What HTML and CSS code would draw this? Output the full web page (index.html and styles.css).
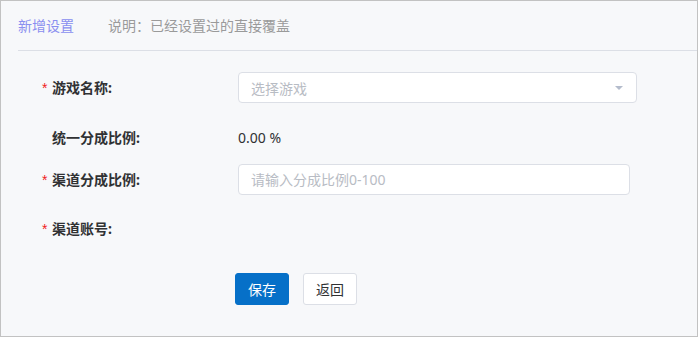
FILE: index.html
```html
<!DOCTYPE html>
<html lang="zh-CN">
<head>
<meta charset="utf-8">
<title>新增设置</title>
<link rel="stylesheet" href="styles.css">
</head>
<body>
<div class="panel">
  <div class="header">
    <span class="tab">新增设置</span>
    <span class="note">说明：已经设置过的直接覆盖</span>
  </div>
  <form class="form">
    <div class="item item-game">
      <label class="label"><span class="star">*</span>游戏名称:</label>
      <div class="select">
        <span class="placeholder">选择游戏</span>
        <span class="caret"></span>
      </div>
    </div>
    <div class="item item-ratio">
      <label class="label"><span class="star"></span>统一分成比例:</label>
      <div class="value">0.00 %</div>
    </div>
    <div class="item item-channel">
      <label class="label"><span class="star">*</span>渠道分成比例:</label>
      <input class="input" type="text" placeholder="请输入分成比例0-100">
    </div>
    <div class="item item-account">
      <label class="label"><span class="star">*</span>渠道账号:</label>
    </div>
    <div class="actions">
      <button type="button" class="btn btn-primary">保存</button>
      <button type="button" class="btn btn-default">返回</button>
    </div>
  </form>
</div>
</body>
</html>
```

FILE: styles.css
```css
html, body {
  margin: 0;
  padding: 0;
  background: #ffffff;
}
body {
  font-family: "Noto Sans", "Noto Sans CJK SC", sans-serif;
  font-size: 14px;
  color: #303133;
}
.panel {
  width: 698px;
  height: 337px;
  box-sizing: border-box;
  border: 1px solid #c2c2c2;
  background: #f7f8fa;
}
.header {
  height: 49px;
  margin-left: 17px;
  border-bottom: 1px solid #dcdfe6;
  display: flex;
  align-items: center;
  gap: 34px;
}
.tab {
  color: #8a8ff0;
  font-size: 14px;
  line-height: 20px;
}
.note {
  color: #9a9a9a;
  font-size: 14px;
  line-height: 20px;
}
.form {
  padding-top: 21px;
  margin: 0;
}
.item {
  display: flex;
  align-items: center;
  height: 31px;
}
.item-ratio { margin-top: 19px; }
.item-channel { margin-top: 11px; }
.item-account { margin-top: 18px; }
.label {
  width: 237px;
  box-sizing: border-box;
  padding-left: 41px;
  display: flex;
  align-items: center;
  font-weight: bold;
  color: #303133;
  line-height: 20px;
}
.star {
  width: 10px;
  color: #f01c1c;
  font-family: "Liberation Sans", sans-serif;
  font-weight: normal;
  font-size: 14px;
}
.select {
  width: 399px;
  height: 31px;
  box-sizing: border-box;
  border: 1px solid #dcdfe6;
  border-radius: 4px;
  background: #ffffff;
  display: flex;
  align-items: center;
  justify-content: space-between;
  padding: 0 13px 0 12px;
}
.placeholder {
  color: #b8bcc4;
}
.caret {
  width: 0;
  height: 0;
  border-left: 4px solid transparent;
  border-right: 4px solid transparent;
  border-top: 4px solid #b4bccc;
}
.value {
  color: #303133;
  line-height: 20px;
}
.input {
  width: 392px;
  height: 31px;
  box-sizing: border-box;
  border: 1px solid #dcdfe6;
  border-radius: 4px;
  background: #ffffff;
  padding: 0 12px;
  font-family: "Noto Sans", "Noto Sans CJK SC", sans-serif;
  font-size: 14px;
  color: #303133;
  outline: none;
  margin: 0;
}
.input::placeholder {
  color: #b8bcc4;
}
.actions {
  margin-top: 29px;
  padding-left: 234px;
  display: flex;
  gap: 14px;
}
.btn {
  width: 54px;
  height: 32px;
  box-sizing: border-box;
  border-radius: 3px;
  font-family: "Noto Sans", "Noto Sans CJK SC", sans-serif;
  font-size: 14px;
  padding: 0;
  margin: 0;
  cursor: pointer;
}
.btn-primary {
  background: #0670c8;
  border: 1px solid #0670c8;
  color: #ffffff;
}
.btn-default {
  background: #ffffff;
  border: 1px solid #dcdfe6;
  color: #303133;
}
```
